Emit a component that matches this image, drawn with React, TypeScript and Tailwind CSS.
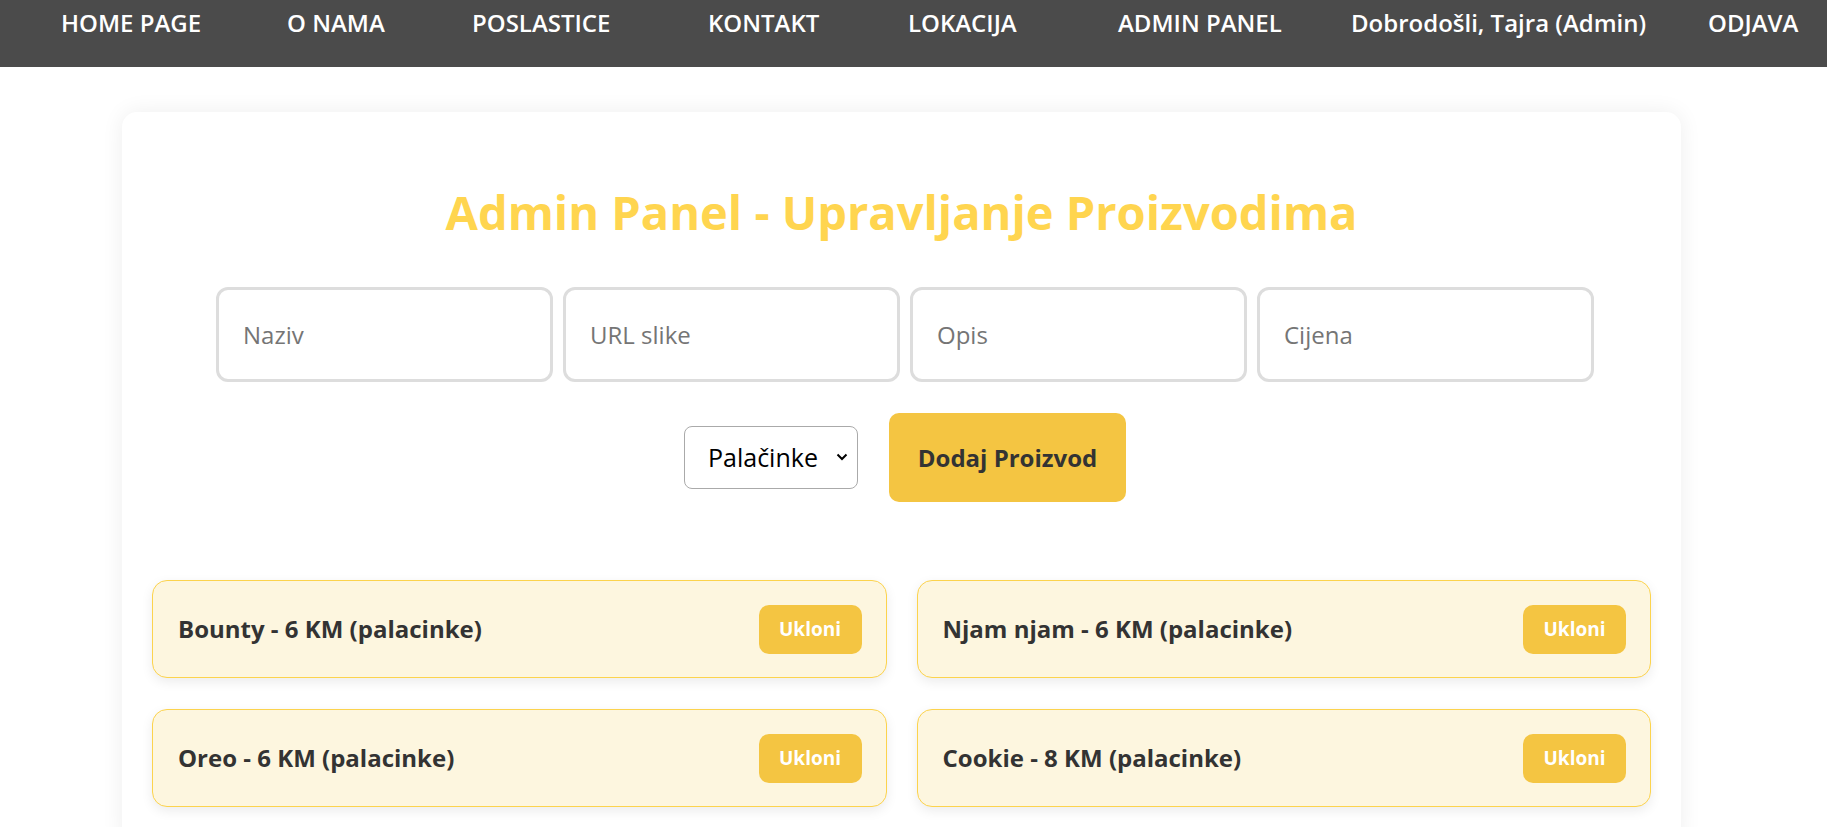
import React from "react"

// nav entries with the widths they take in the original layout
const links = [
  { label: "HOME PAGE", w: "w-[140px]" },
  { label: "O NAMA", w: "w-[99px]" },
  { label: "POSLASTICE", w: "w-[150px]" },
  { label: "KONTAKT", w: "w-[114px]" },
  { label: "LOKACIJA", w: "w-[124px]" },
  { label: "ADMIN PANEL", w: "w-[170px]" },
]

const products = [
  { name: "Bounty", price: 6, category: "palacinke" },
  { name: "Njam njam", price: 6, category: "palacinke" },
  { name: "Oreo", price: 6, category: "palacinke" },
  { name: "Cookie", price: 8, category: "palacinke" },
]

const fields = ["Naziv", "URL slike", "Opis", "Cijena"]

function Navbar() {
  return (
    <nav className="h-[67px] bg-[#4b4b4b] text-white">
      <ul className="flex items-start pl-[61px] pt-[5px] text-[24px] leading-[36px] font-semibold">
        {links.map((l) => (
          <li key={l.label} className={`${l.w} mr-[86px] whitespace-nowrap`}>
            <a href="#">{l.label}</a>
          </li>
        ))}
        <li className="-ml-[23px] mr-[62px] w-[295px] whitespace-nowrap">Dobrodošli, Tajra (Admin)</li>
        <li className="whitespace-nowrap">
          <a href="#">ODJAVA</a>
        </li>
      </ul>
    </nav>
  )
}

function ProductCard({ name, price, category }: { name: string; price: number; category: string }) {
  return (
    <div className="flex h-[98px] items-center justify-between rounded-[15px] border border-[#fcd34d] bg-[#fdf6df] pl-[25px] pr-[24px] shadow-[0_4px_12px_rgba(0,0,0,0.08)]">
      <span className="text-[24px] font-bold text-[#333]">
        {name} - {price} KM ({category})
      </span>
      <button className="h-[49px] w-[103px] rounded-[10px] bg-[#f4c542] text-[19px] font-bold text-white">Ukloni</button>
    </div>
  )
}

export default function App() {
  return (
    <div className="min-h-screen bg-white font-['Open_Sans',sans-serif]">
      <Navbar />
      <main className="pt-[45px]">
        <div className="ml-[122px] w-[1559px] rounded-[15px] bg-white px-[30px] pb-[40px] shadow-[0_0_22px_rgba(0,0,0,0.07)]">
          <h2 className="pt-[71px] text-center text-[47px] font-bold leading-[58px] text-[#ffd54f]">
            Admin Panel - Upravljanje Proizvodima
          </h2>

          <div className="mt-[46px] ml-[7px] flex justify-center gap-[10px]">
            {fields.map((f) => (
              <input
                key={f}
                placeholder={f}
                className="h-[95px] w-[337px] rounded-[12px] border-[3px] border-[#dddddd] bg-white pl-[24px] text-[24px] text-[#333] outline-none placeholder:text-[#757575]"
              />
            ))}
          </div>

          <div className="mt-[31px] ml-[7px] flex items-center justify-center gap-[31px]">
            <div className="relative">
              <select className="h-[63px] w-[174px] appearance-none rounded-[8px] border border-[#aaaaaa] bg-white pl-[23px] text-[25px] text-black outline-none">
                <option>Palačinke</option>
                <option>Torte</option>
                <option>Kolači</option>
              </select>
              <svg
                className="pointer-events-none absolute right-[10px] top-[27px]"
                width="12"
                height="8"
                viewBox="0 0 12 8"
                fill="none"
                stroke="#000"
                strokeWidth="2"
              >
                <path d="M1.5 1.5 6 6l4.5-4.5" />
              </svg>
            </div>
            <button className="h-[89px] w-[237px] rounded-[10px] bg-[#f4c542] text-[24px] font-bold text-[#333]">
              Dodaj Proizvod
            </button>
          </div>

          <div className="mt-[78px] grid grid-cols-2 gap-x-[30px] gap-y-[31px]">
            {products.map((p) => (
              <ProductCard key={p.name} {...p} />
            ))}
          </div>
        </div>
      </main>
    </div>
  )
}
